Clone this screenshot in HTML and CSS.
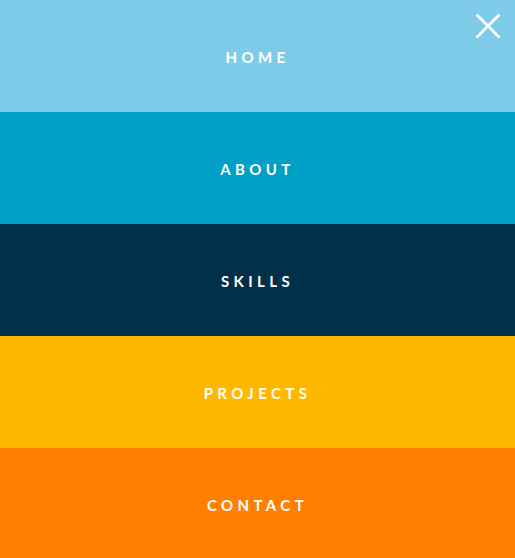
FILE: index.html
```html
<!DOCTYPE html>
<html>
<head>
<meta charset="utf-8">
<link rel="stylesheet" href="styles.css">
</head>
<body>
<nav class="menu">
  <a class="item home" href="#">HOME</a>
  <a class="item about" href="#">ABOUT</a>
  <a class="item skills" href="#">SKILLS</a>
  <a class="item projects" href="#">PROJECTS</a>
  <a class="item contact" href="#">CONTACT</a>
</nav>
<button class="close" aria-label="Close">
  <svg width="26" height="26" viewBox="0 0 26 26"><path d="M1.5 1.5 L24.5 24.5 M24.5 1.5 L1.5 24.5" stroke="#fff" stroke-width="2.6" fill="none"/></svg>
</button>
</body>
</html>
```
FILE: styles.css
```css
html, body {
  margin: 0;
  padding: 0;
  height: 100%;
  overflow: hidden;
}
body {
  font-family: Lato, "Open Sans", sans-serif;
  position: relative;
}
.menu {
  display: flex;
  flex-direction: column;
  height: 100%;
}
.item {
  flex: 0 0 112px;
  box-sizing: border-box;
  display: flex;
  align-items: center;
  justify-content: center;
  color: #fff;
  text-decoration: none;
  font-weight: 700;
  font-size: 15px;
  letter-spacing: 4.4px;
  padding-top: 2px;
}
.home { background: #7fcbea; }
.about { background: #00a0c6; }
.skills { background: #00304a; }
.projects { background: #ffb800; }
.contact { background: #ff7f00; }
.close {
  position: absolute;
  top: 13px;
  right: 14px;
  background: none;
  border: 0;
  padding: 0;
  width: 26px;
  height: 26px;
  cursor: pointer;
}
.close svg { display: block; }
```
